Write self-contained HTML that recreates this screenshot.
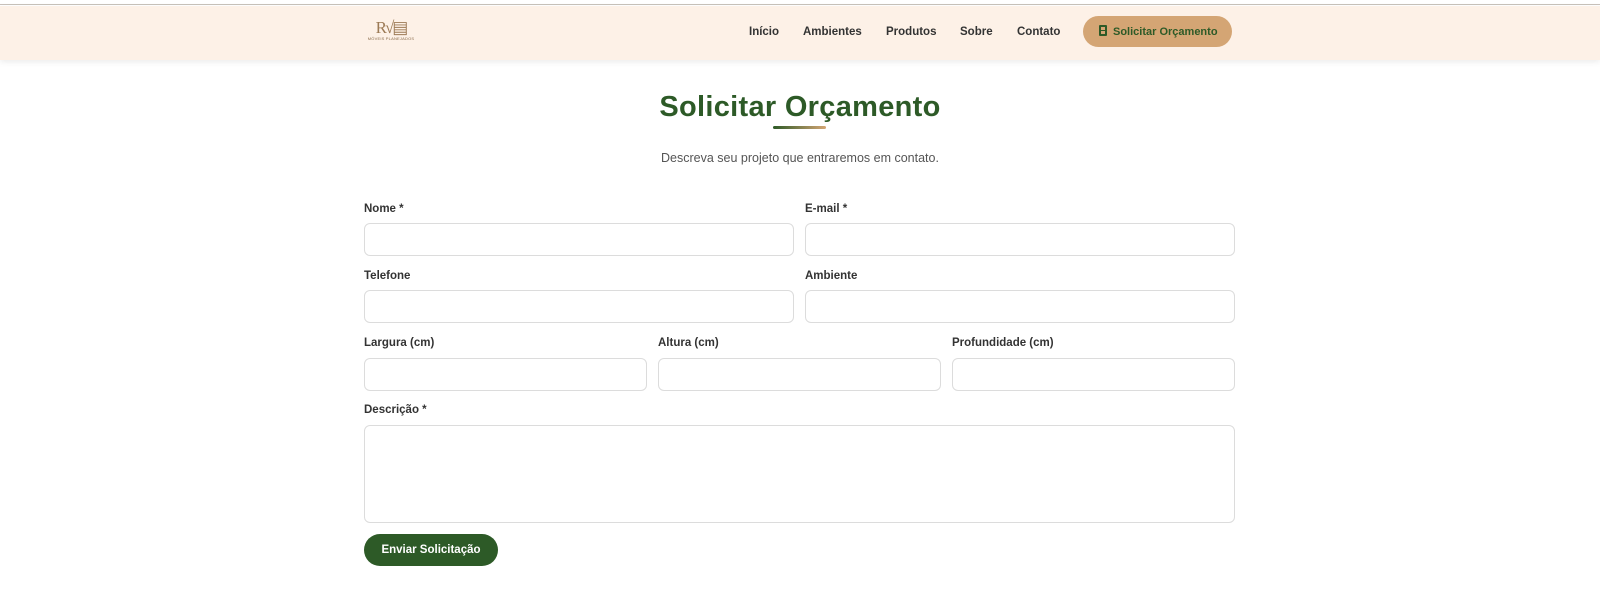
<!DOCTYPE html>
<html><head><meta charset="utf-8">
<style>
*{box-sizing:border-box;margin:0;padding:0}
body{width:1600px;height:596px;background:#fff;font-family:"Liberation Sans",sans-serif;color:#333;overflow:hidden;position:relative}
.topline{position:absolute;top:0;left:0;width:1600px;height:5px;background:#fff;border-bottom:1px solid #c9c2bb}
header{position:absolute;top:6px;left:0;width:1600px;height:54px;background:#fdf1e7;box-shadow:0 2px 6px rgba(0,0,0,.08)}
.logo{position:absolute;left:364px;top:13px;width:54px;text-align:center}
.logo .mk{font-family:"Liberation Serif",serif;color:#9c7a55;font-size:17px;line-height:17px;letter-spacing:-2px}
.logo .tx{font-size:4px;color:#8a6b4a;letter-spacing:.2px;white-space:nowrap}
nav a{position:absolute;top:20px;font-size:11.5px;color:#333;font-weight:bold;text-decoration:none}
.btn{position:absolute;left:1083px;top:10px;width:149px;height:31px;background:#d4a574;border-radius:16px;color:#2d5a27;font-size:11px;font-weight:bold;line-height:33px;padding-left:16px}
.btn i{display:inline-block;width:8px;height:11px;border:2px solid #2d5a27;border-radius:1px;vertical-align:-1px;margin-right:6px;background:linear-gradient(#2d5a27,#2d5a27) 0 3px/100% 1px no-repeat}
h1{position:absolute;top:91px;left:0;width:1600px;text-align:center;font-size:29px;color:#2d5a27;font-weight:bold;letter-spacing:.3px}
.ul{position:absolute;left:773px;top:126px;width:53px;height:3px;background:linear-gradient(90deg,#2d5a27,#d4a574);border-radius:2px}
.sub{position:absolute;top:151px;left:0;width:1600px;text-align:center;font-size:12.5px;color:#555}
label{position:absolute;font-size:11.5px;font-weight:bold;color:#333}
.in{position:absolute;height:33px;border:1px solid #dcdcdc;border-radius:6px;background:#fff}
.send{position:absolute;left:364px;top:534px;width:134px;height:32px;background:#2d5a27;border-radius:16px;color:#fff;font-size:11.5px;font-weight:bold;text-align:center;line-height:33px}
</style></head><body>
<div class="topline"></div>
<header>
<div class="logo"><div class="mk">R√▤</div><div class="tx">MÓVEIS PLANEJADOS</div></div>
<nav>
<a style="left:749px">Início</a>
<a style="left:803px">Ambientes</a>
<a style="left:886px">Produtos</a>
<a style="left:960px">Sobre</a>
<a style="left:1017px">Contato</a>
</nav>
<div class="btn"><i></i>Solicitar Orçamento</div>
</header>
<h1>Solicitar Orçamento</h1>
<div class="ul"></div>
<div class="sub">Descreva seu projeto que entraremos em contato.</div>

<label style="left:364px;top:203px">Nome *</label>
<label style="left:805px;top:203px">E-mail *</label>
<div class="in" style="left:364px;top:223px;width:430px"></div>
<div class="in" style="left:805px;top:223px;width:430px"></div>

<label style="left:364px;top:270px">Telefone</label>
<label style="left:805px;top:270px">Ambiente</label>
<div class="in" style="left:364px;top:290px;width:430px"></div>
<div class="in" style="left:805px;top:290px;width:430px"></div>

<label style="left:364px;top:337px">Largura (cm)</label>
<label style="left:658px;top:337px">Altura (cm)</label>
<label style="left:952px;top:337px">Profundidade (cm)</label>
<div class="in" style="left:364px;top:358px;width:283px"></div>
<div class="in" style="left:658px;top:358px;width:283px"></div>
<div class="in" style="left:952px;top:358px;width:283px"></div>

<label style="left:364px;top:404px">Descrição *</label>
<div class="in" style="left:364px;top:425px;width:871px;height:98px"></div>

<div class="send">Enviar Solicitação</div>
</body></html>
